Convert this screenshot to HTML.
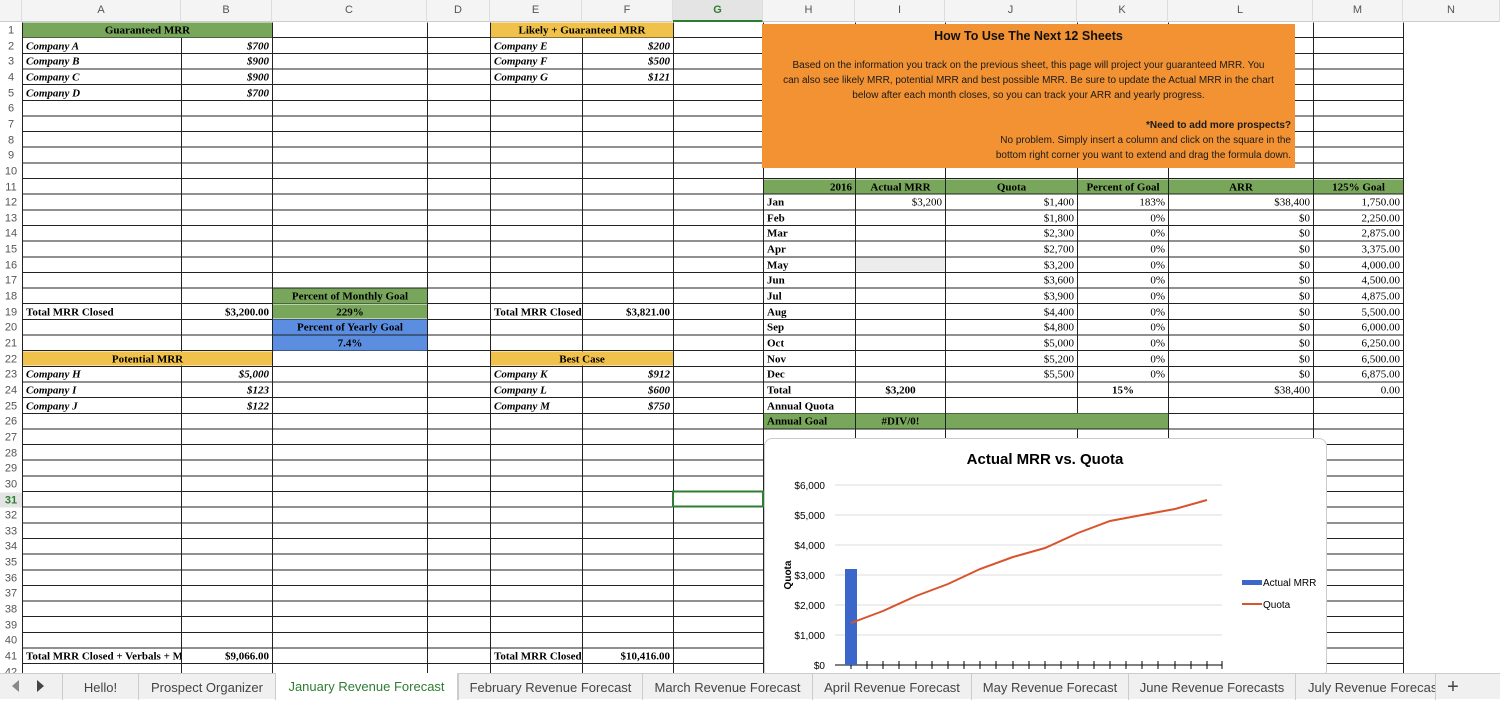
<!DOCTYPE html>
<html><head><meta charset="utf-8"><style>
*{margin:0;padding:0;box-sizing:border-box}
body{width:1500px;height:699px;overflow:hidden;background:#fff;position:relative;font-family:"Liberation Serif",serif}
.hdr{position:absolute;left:0;top:0;width:1500px;height:22px;background:#f4f4f4;border-bottom:1px solid #ccc}
.hl{position:absolute;top:0;height:22px;font:11px "Liberation Sans",sans-serif;color:#555;text-align:center;line-height:21px;border-right:1px solid #ddd}
.rows{position:absolute;left:22px;top:21px;width:1381px;height:652px;background:repeating-linear-gradient(to bottom,transparent 0,transparent 14.65px,#222 14.65px,#222 15.65px)}
.rn{position:absolute;left:0;width:22px;height:15.65px;font:11px "Liberation Sans",sans-serif;color:#555;text-align:center;line-height:16px;background:#fff}
.vl{position:absolute;top:21px;height:652px;width:1px;background:#222}
.c{position:absolute;height:14.65px;line-height:16px;font-size:11px;font-weight:bold;color:#000;padding:0 3px;white-space:nowrap;overflow:hidden}
.i{font-style:italic}
.r{text-align:right}.m{text-align:center}
.g{background:#78a65a}.y{background:#f0c24b}.b{background:#5b8ee0}
.tabs{position:absolute;left:0;top:673px;width:1500px;height:26px;background:#f0f0f0;border-top:1px solid #ccc;font:13px "Liberation Sans",sans-serif;color:#444}
.tab{position:absolute;top:0;height:26px;line-height:28px;text-align:center;border-left:1px solid #ccc}
#sh{position:absolute;left:0;top:0;width:1500px;height:673px;transform:translateY(1.5px)}
</style></head><body>
<div id="sh">
<div class="rows"></div>
<div class="vl" style="left:22px"></div><div class="vl" style="left:181px"></div><div class="vl" style="left:272px"></div><div class="vl" style="left:427px"></div><div class="vl" style="left:490px"></div><div class="vl" style="left:582px"></div><div class="vl" style="left:673px"></div><div class="vl" style="left:763px"></div><div class="vl" style="left:855px"></div><div class="vl" style="left:945px"></div><div class="vl" style="left:1077px"></div><div class="vl" style="left:1168px"></div><div class="vl" style="left:1313px"></div><div class="vl" style="left:1403px"></div>
<div id="rn"></div>
<script>
var h='';for(var n=1;n<=42;n++){var t=21+(n-1)*15.65;h+='<div class="rn" style="top:'+t+'px'+(n==31?';color:#2e7d32;font-weight:bold;background:#e4e4e4':'')+'">'+n+'</div>';}
document.getElementById('rn').innerHTML=h;
</script>
<div class="c g m" style="left:23px;top:21px;width:249px">Guaranteed MRR</div>
<div class="c i" style="left:23px;top:36.65px;width:158px">Company A</div><div class="c i r" style="left:182px;top:36.65px;width:90px">$700</div>
<div class="c i" style="left:23px;top:52.3px;width:158px">Company B</div><div class="c i r" style="left:182px;top:52.3px;width:90px">$900</div>
<div class="c i" style="left:23px;top:67.95px;width:158px">Company C</div><div class="c i r" style="left:182px;top:67.95px;width:90px">$900</div>
<div class="c i" style="left:23px;top:83.6px;width:158px">Company D</div><div class="c i r" style="left:182px;top:83.6px;width:90px">$700</div>
<div class="c y m" style="left:491px;top:21px;width:182px">Likely + Guaranteed MRR</div>
<div class="c i" style="left:491px;top:36.65px;width:91px">Company E</div><div class="c i r" style="left:583px;top:36.65px;width:90px">$200</div>
<div class="c i" style="left:491px;top:52.3px;width:91px">Company F</div><div class="c i r" style="left:583px;top:52.3px;width:90px">$500</div>
<div class="c i" style="left:491px;top:67.95px;width:91px">Company G</div><div class="c i r" style="left:583px;top:67.95px;width:90px">$121</div>
<div class="c g m" style="left:273px;top:287.05px;width:154px">Percent of Monthly Goal</div>
<div class="c g m" style="left:273px;top:302.7px;width:154px">229%</div>
<div class="c b m" style="left:273px;top:318.35px;width:154px">Percent of Yearly Goal</div>
<div class="c b m" style="left:273px;top:334px;width:154px">7.4%</div>
<div class="c" style="left:23px;top:302.7px;width:158px">Total MRR Closed</div><div class="c r" style="left:182px;top:302.7px;width:90px">$3,200.00</div>
<div class="c" style="left:491px;top:302.7px;width:91px">Total MRR Closed</div><div class="c r" style="left:583px;top:302.7px;width:90px">$3,821.00</div>
<div class="c y m" style="left:23px;top:349.65px;width:249px">Potential MRR</div>
<div class="c i" style="left:23px;top:365.3px;width:158px">Company H</div><div class="c i r" style="left:182px;top:365.3px;width:90px">$5,000</div>
<div class="c i" style="left:23px;top:380.95px;width:158px">Company I</div><div class="c i r" style="left:182px;top:380.95px;width:90px">$123</div>
<div class="c i" style="left:23px;top:396.6px;width:158px">Company J</div><div class="c i r" style="left:182px;top:396.6px;width:90px">$122</div>
<div class="c y m" style="left:491px;top:349.65px;width:182px">Best Case</div>
<div class="c i" style="left:491px;top:365.3px;width:91px">Company K</div><div class="c i r" style="left:583px;top:365.3px;width:90px">$912</div>
<div class="c i" style="left:491px;top:380.95px;width:91px">Company L</div><div class="c i r" style="left:583px;top:380.95px;width:90px">$600</div>
<div class="c i" style="left:491px;top:396.6px;width:91px">Company M</div><div class="c i r" style="left:583px;top:396.6px;width:90px">$750</div>
<div class="c" style="left:23px;top:647px;width:158px">Total MRR Closed + Verbals + Mo</div><div class="c r" style="left:182px;top:647px;width:90px">$9,066.00</div>
<div class="c" style="left:491px;top:647px;width:91px">Total MRR Closed</div><div class="c r" style="left:583px;top:647px;width:90px">$10,416.00</div>
<div style="position:absolute;left:672px;top:489px;width:92px;height:17px;border:2px solid #2e7d32"></div>
<div class="c g r" style="left:764px;top:177.5px;width:91px">2016</div>
<div class="c g m" style="left:856px;top:177.5px;width:89px">Actual MRR</div>
<div class="c g m" style="left:946px;top:177.5px;width:131px">Quota</div>
<div class="c g m" style="left:1078px;top:177.5px;width:90px">Percent of Goal</div>
<div class="c g m" style="left:1169px;top:177.5px;width:144px">ARR</div>
<div class="c g m" style="left:1314px;top:177.5px;width:89px">125% Goal</div>
<div id="rt"></div>
<script>
var m=['Jan','Feb','Mar','Apr','May','Jun','Jul','Aug','Sep','Oct','Nov','Dec'];
var q=['1,400','1,800','2,300','2,700','3,200','3,600','3,900','4,400','4,800','5,000','5,200','5,500'];
var g=['1,750.00','2,250.00','2,875.00','3,375.00','4,000.00','4,500.00','4,875.00','5,500.00','6,000.00','6,250.00','6,500.00','6,875.00'];
var s='';for(var k=0;k<12;k++){var t=21+(11+k)*15.65;var st='font-weight:normal;';
s+='<div class="c" style="left:764px;top:'+t+'px;width:91px">'+m[k]+'</div>';
if(k==0)s+='<div class="c r" style="'+st+'left:856px;top:'+t+'px;width:89px">$3,200</div>';
if(k==4)s+='<div class="c" style="left:856px;top:'+t+'px;width:89px;background:#ececec"></div>';
s+='<div class="c r" style="'+st+'left:946px;top:'+t+'px;width:131px">$'+q[k]+'</div>';
s+='<div class="c r" style="'+st+'left:1078px;top:'+t+'px;width:90px">'+(k==0?'183%':'0%')+'</div>';
s+='<div class="c r" style="'+st+'left:1169px;top:'+t+'px;width:144px">'+(k==0?'$38,400':'$0')+'</div>';
s+='<div class="c r" style="'+st+'left:1314px;top:'+t+'px;width:89px">'+g[k]+'</div>';}
document.getElementById('rt').innerHTML=s;
</script>
<div class="c" style="left:764px;top:380.95px;width:91px">Total</div>
<div class="c m" style="left:856px;top:380.95px;width:89px">$3,200</div>
<div class="c m" style="left:1078px;top:380.95px;width:90px">15%</div>
<div class="c r" style="left:1169px;top:380.95px;width:144px;font-weight:normal">$38,400</div>
<div class="c r" style="left:1314px;top:380.95px;width:89px;font-weight:normal">0.00</div>
<div class="c" style="left:764px;top:396.6px;width:91px">Annual Quota</div>
<div class="c g" style="left:764px;top:412.25px;width:91px">Annual Goal</div>
<div class="c g m" style="left:856px;top:412.25px;width:89px">#DIV/0!</div>
<div class="c g" style="left:946px;top:412.25px;width:222px"></div>
</div>
<div class="hdr"></div>
<div class="hl" style="left:0;width:22px"></div>
<div class="hl" style="left:22px;width:159px">A</div>
<div class="hl" style="left:181px;width:91px">B</div>
<div class="hl" style="left:272px;width:155px">C</div>
<div class="hl" style="left:427px;width:63px">D</div>
<div class="hl" style="left:490px;width:92px">E</div>
<div class="hl" style="left:582px;width:91px">F</div>
<div class="hl" style="left:673px;width:90px;color:#2e7d32;font-weight:bold;background:#e4e4e4;border-bottom:2px solid #2e7d32">G</div>
<div class="hl" style="left:763px;width:92px">H</div>
<div class="hl" style="left:855px;width:90px">I</div>
<div class="hl" style="left:945px;width:132px">J</div>
<div class="hl" style="left:1077px;width:91px">K</div>
<div class="hl" style="left:1168px;width:145px">L</div>
<div class="hl" style="left:1313px;width:90px">M</div>
<div class="hl" style="left:1403px;width:97px">N</div>
<div style="position:absolute;left:762px;top:24px;width:533px;height:144px;background:#f29232;font:10px 'Liberation Sans',sans-serif;color:#1a1a1a;line-height:15px">
<div style="text-align:center;font-weight:bold;font-size:12.5px;margin-top:5px;color:#111">How To Use The Next 12 Sheets</div>
<div style="text-align:center;margin-top:14px;padding:0 6px">Based on the information you track on the previous sheet, this page will project your guaranteed MRR. You<br>can also see likely MRR, potential MRR and best possible MRR. Be sure to update the Actual MRR in the chart<br>below after each month closes, so you can track your ARR and yearly progress.</div>
<div style="text-align:right;margin-top:15px;padding-right:4px"><b>*Need to add more prospects?</b><br>No problem. Simply insert a column and click on the square in the<br>bottom right corner you want to extend and drag the formula down.</div>
</div>
<div style="position:absolute;left:764px;top:438px;width:563px;height:240px;background:#fff;border:1px solid #ccc;border-radius:8px"></div>
<svg style="position:absolute;left:764px;top:438px" width="563" height="235" font-family="Liberation Sans, sans-serif">
<text x="281" y="26" font-size="15" font-weight="bold" text-anchor="middle" fill="#000">Actual MRR vs. Quota</text>
<g font-size="10" fill="#000" text-anchor="end">
<text x="61" y="51">$6,000</text><text x="61" y="81">$5,000</text><text x="61" y="111">$4,000</text><text x="61" y="141">$3,000</text><text x="61" y="171">$2,000</text><text x="61" y="201">$1,000</text><text x="61" y="231">$0</text></g>
<g stroke="#ddd"><line x1="71" x2="458" y1="47" y2="47"/><line x1="71" x2="458" y1="77" y2="77"/><line x1="71" x2="458" y1="107" y2="107"/><line x1="71" x2="458" y1="137" y2="137"/><line x1="71" x2="458" y1="167" y2="167"/><line x1="71" x2="458" y1="197" y2="197"/></g>
<line x1="71" x2="458" y1="227" y2="227" stroke="#000"/>
<g stroke="#000"><script>document.write('');</script>
<line x1="87" x2="87" y1="223" y2="231"/><line x1="103" x2="103" y1="223" y2="231"/><line x1="119" x2="119" y1="223" y2="231"/><line x1="135" x2="135" y1="223" y2="231"/><line x1="152" x2="152" y1="223" y2="231"/><line x1="168" x2="168" y1="223" y2="231"/><line x1="184" x2="184" y1="223" y2="231"/><line x1="200" x2="200" y1="223" y2="231"/><line x1="216" x2="216" y1="223" y2="231"/><line x1="232" x2="232" y1="223" y2="231"/><line x1="249" x2="249" y1="223" y2="231"/><line x1="265" x2="265" y1="223" y2="231"/><line x1="281" x2="281" y1="223" y2="231"/><line x1="297" x2="297" y1="223" y2="231"/><line x1="314" x2="314" y1="223" y2="231"/><line x1="330" x2="330" y1="223" y2="231"/><line x1="346" x2="346" y1="223" y2="231"/><line x1="362" x2="362" y1="223" y2="231"/><line x1="378" x2="378" y1="223" y2="231"/><line x1="394" x2="394" y1="223" y2="231"/><line x1="411" x2="411" y1="223" y2="231"/><line x1="427" x2="427" y1="223" y2="231"/><line x1="443" x2="443" y1="223" y2="231"/><line x1="458" x2="458" y1="223" y2="231"/></g>
<text transform="translate(27,137) rotate(-90)" font-size="10" font-weight="bold" text-anchor="middle">Quota</text>
<rect x="81" y="131" width="12" height="96" fill="#3a67c9"/>
<polyline fill="none" stroke="#d9532c" stroke-width="2" points="87,185 119,173 152,158 184,146 216,131 249,119 281,110 314,95 346,83 378,77 411,71 443,62"/>
<rect x="478" y="142" width="20" height="5" fill="#3a67c9"/><text x="499" y="148" font-size="10">Actual MRR</text>
<line x1="478" x2="498" y1="166" y2="166" stroke="#d9532c" stroke-width="2"/><text x="499" y="170" font-size="10">Quota</text>
</svg>
<div class="tabs">
<div style="position:absolute;left:12px;top:6px;width:0;height:0;border-top:6px solid transparent;border-bottom:6px solid transparent;border-right:7px solid #888"></div>
<div style="position:absolute;left:37px;top:6px;width:0;height:0;border-top:6px solid transparent;border-bottom:6px solid transparent;border-left:7px solid #444"></div>
<div class="tab" style="left:62px;width:76px">Hello!</div>
<div class="tab" style="left:138px;width:137px">Prospect Organizer</div>
<div class="tab" style="left:275px;width:183px;background:#fff;color:#2e7d32;top:-1px;height:27px;border-right:1px solid #ccc">January Revenue Forecast</div>
<div class="tab" style="left:458px;width:184px">February Revenue Forecast</div>
<div class="tab" style="left:642px;width:170px">March Revenue Forecast</div>
<div class="tab" style="left:812px;width:159px">April Revenue Forecast</div>
<div class="tab" style="left:971px;width:157px">May Revenue Forecast</div>
<div class="tab" style="left:1128px;width:167px">June Revenue Forecasts</div>
<div class="tab" style="left:1295px;width:140px;text-align:left;padding-left:12px;overflow:hidden;white-space:nowrap">July Revenue Forecast</div>
<div class="tab" style="left:1435px;width:35px;font-size:20px;line-height:26px">+</div>
</div>
</body></html>
